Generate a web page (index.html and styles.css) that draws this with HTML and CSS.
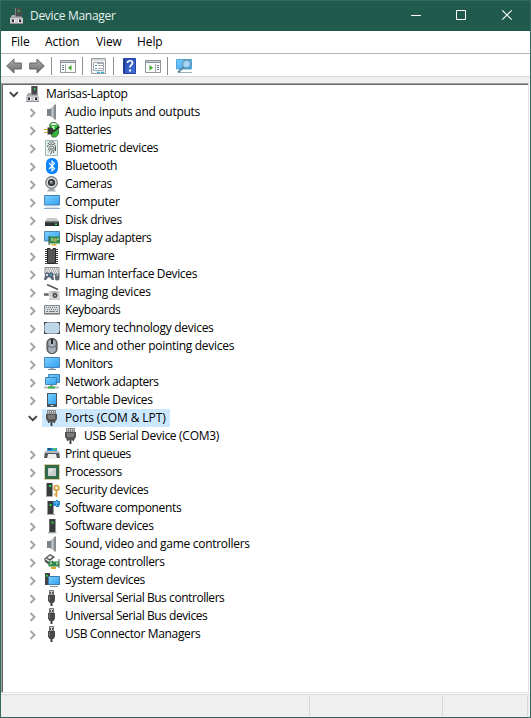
FILE: index.html
```html
<!DOCTYPE html>
<html lang="en">
<head>
<meta charset="utf-8">
<title>Device Manager</title>
<link rel="stylesheet" href="styles.css">
</head>
<body>
<svg class="defs" aria-hidden="true">
<defs>
<linearGradient id="g-screen" x1="0" y1="0" x2="1" y2="1"><stop offset="0" stop-color="#7cd0ff"/><stop offset="1" stop-color="#2fa0f0"/></linearGradient>
<linearGradient id="g-metal" x1="0" y1="0" x2="1" y2="0"><stop offset="0" stop-color="#6f7478"/><stop offset=".5" stop-color="#c5c9cc"/><stop offset="1" stop-color="#7b8084"/></linearGradient>
<linearGradient id="g-arrow" x1="0" y1="0" x2="0" y2="1"><stop offset="0" stop-color="#b4b4b4"/><stop offset=".5" stop-color="#8b8b8b"/><stop offset="1" stop-color="#707070"/></linearGradient>
<linearGradient id="g-help" x1="0" y1="0" x2="1" y2="1"><stop offset="0" stop-color="#2448ac"/><stop offset="1" stop-color="#4672df"/></linearGradient>
</defs>
<symbol id="right" viewBox="0 0 9 10"><path d="M2.500 1l4 4-4 4" fill="none" stroke="#a6a6a6" stroke-width="2"/></symbol>
<symbol id="down" viewBox="0 0 10 7"><path d="M.8 1.200l4 4 4-4" fill="none" stroke="#404040" stroke-width="1.900"/></symbol>
<symbol id="device" viewBox="0 0 16 16"><path d="M6 0h6.500v9H6z" fill="#494c4e"/><path d="M6 0h1v9H6z" fill="#808284"/><path d="M9 2h1.300v2H9z" fill="#2ce04a"/><path d="M3 7h3v1.500h6.500V9L14 10.500H1z" fill="#aaaaae"/><path d="M1 10h13v5.500H1z" fill="#c9c9cd"/><path d="M1 15h13v1H1z" fill="#929298"/><path d="M3 11.500h2v2.500H3zM10 11.500h2v2.500h-2z" fill="#2a2a2a"/><path d="M5 11.500h1v2.500H5zM9 11.500h1v2.500H9z" fill="#fff"/></symbol>
<symbol id="audio" viewBox="0 0 16 16"><path d="M3 5h3v7H3z" fill="#7d858c"/><path d="M6 5l5-4.500v15L6 12z" fill="url(#g-metal)"/><path d="M10.500.5h1.500v15h-1.500z" fill="#858b90"/></symbol>
<symbol id="battery" viewBox="0 0 16 16"><path d="M5.500 3l2-2.500h4L14.500 3v9L12 15H8z" fill="#35b53c" stroke="#356d38" stroke-width=".8"/><path d="M6.500 3L8 1h3.500L13.500 3z" fill="#d6e8d2"/><path d="M8 4h2.500v3.500H8z" fill="#b9f5b3"/><path d="M3.500 5.500H7c3.500 0 3.500 7 0 7H3.500z" fill="#373737"/><path d="M0 7.500h4M0 10.500h4" stroke="#c4a543" stroke-width="1.200"/><path d="M9 9c4 0 3-3 6.500-4" stroke="#222" stroke-width="1.500" fill="none"/></symbol>
<symbol id="finger" viewBox="0 0 16 16"><path d="M1.500.500h12v15h-12z" fill="#e6f1ee" stroke="#9ebab3"/><g fill="none" stroke="#474b4a" stroke-width=".9"><path d="M4 4c1-3 6-3 7 0M3.500 7c0-4 8-4 8 0v4M4 10c2-1 0-4 3.500-4S10 9 9.500 13M4.500 12c2-1 1.500-4 3-4s.5 4-1 6"/></g></symbol>
<symbol id="bluetooth" viewBox="0 0 16 16"><rect x="2" y="0" width="12" height="16" rx="5.500" fill="#0a84ff"/><path d="M5 5l5.500 5.500L8 13V3l2.500 2.500L5 11" fill="none" stroke="#fff" stroke-width="1.100"/></symbol>
<symbol id="camera" viewBox="0 0 16 16"><path d="M3 15.500l2-3h5l2 3z" fill="#ababab"/><circle cx="7.500" cy="6.500" r="5.800" fill="#d5d7d8" stroke="#777b7e" stroke-width="1.200"/><circle cx="7.500" cy="6.500" r="3.600" fill="#303336"/><circle cx="7.500" cy="6.500" r="1.800" fill="#777e84"/><circle cx="6.800" cy="5.500" r=".8" fill="#e1e6e9"/></symbol>
<symbol id="computer" viewBox="0 0 16 16"><path d="M.5 1.500h15v9.500H.5z" fill="url(#g-screen)" stroke="#477fae"/><path d="M2 12.500h12l1.500 2H.5z" fill="#dce4eb"/><path d="M0 14.500h16" stroke="#8eacc8"/></symbol>
<symbol id="disk" viewBox="0 0 16 16"><path d="M3 6h9.500L15 10H1z" fill="#c8cacb"/><path d="M1 9.500h14V14H1z" fill="#2e3030"/><path d="M1 10h14" stroke="#777"/><path d="M11 11.500h2V13h-2z" fill="#38dd51"/></symbol>
<symbol id="display" viewBox="0 0 16 16"><path d="M.5 1.500h15V11H.5z" fill="url(#g-screen)" stroke="#4e88b5"/><path d="M5 6.500h11v7H5z" fill="#36894a"/><path d="M5 6v9" stroke="#365645"/><path d="M7 8h2v3H7zM13 8h2v2h-2z" fill="#80c183"/><circle cx="11" cy="10" r="2" fill="#9ca95f"/><path d="M7.500 14h5v1.500h-5z" fill="#e9ac2d"/></symbol>
<symbol id="firmware" viewBox="0 0 16 16"><path d="M2 1v15M13 1v15" stroke="#424242" stroke-width="2" stroke-dasharray="1 1"/><path d="M3.500.500h2.500c0 2 3 2 3 0h2.500v15h-8z" fill="#565656" stroke="#242424"/></symbol>
<symbol id="hid" viewBox="0 0 16 16"><path d="M1 1.500h14v7H1z" fill="#e5e5e5" stroke="#8d8d8d"/><path d="M2 3h12M3 5h11M2 7h12" stroke="#858585" stroke-dasharray="1 1"/><path d="M1.500 7Q3 5.500 5 7.500Q7 5.500 9 7L10 14H8L6 11.500H4L2 14H0z" fill="#586878"/><circle cx="3" cy="9" r="1" fill="#fff"/><circle cx="7" cy="9" r="1" fill="#3ba8ed"/><rect x="11" y="7" width="4.500" height="7.500" rx="2" fill="#626a70"/><path d="M13.200 7v3" stroke="#ddd"/></symbol>
<symbol id="imaging" viewBox="0 0 16 16"><path d="M3 .5l11 5" stroke="#505050" stroke-width="1.400"/><path d="M5 7h10.500v7H7l-2-2z" fill="#d0d0cc"/><path d="M8 7.500h5v2H8zM0 9h5v3H0z" fill="#aaa"/><path d="M0 9.500h4v2H0z" fill="#666"/><circle cx="11" cy="11.500" r="2.400" fill="#454545"/><circle cx="11" cy="11.500" r="1" fill="#b1bec6"/><path d="M5 15h11" stroke="#a3a3a3"/></symbol>
<symbol id="keyboard" viewBox="0 0 16 16"><path d="M.5 3.500h15v8H.5z" fill="#d9dcde" stroke="#7e8489"/><path d="M2 5.500h12M3 7.500h11" stroke="#717981" stroke-dasharray="1 1"/><path d="M2 9.500h12" stroke="#717981" stroke-dasharray="2 1 6 1"/><path d="M0 12h16" stroke="#686c6e"/></symbol>
<symbol id="memory" viewBox="0 0 16 16"><rect x=".5" y="2.500" width="15" height="11" rx="1" fill="#bdd7e8" stroke="#8c9aa3"/><path d="M.5 4.500v-2h2M13.500 2.500h2v2M.5 11.500v2h2M13.500 13.500h2v-2" fill="none" stroke="#2c3033"/></symbol>
<symbol id="mouse" viewBox="0 0 16 16"><rect x="3" y=".5" width="10" height="15" rx="4.500" fill="#8f969e" stroke="#303338"/><path d="M5 3v8c0 4 2 4 3 4s3 0 3-4V3" fill="#aab0b7"/><path d="M8 1v5" stroke="#26282b" stroke-width="2"/><path d="M4 8q4 3 8 0" stroke="#626870" fill="none"/></symbol>
<symbol id="monitor" viewBox="0 0 16 16"><path d="M.5 1.500h15v10H.5z" fill="url(#g-screen)" stroke="#4686bb"/><path d="M6 12h4v1.500H6z" fill="#a2b8c8"/><path d="M4 13.500h8" stroke="#79899a"/></symbol>
<symbol id="network" viewBox="0 0 16 16"><path d="M4.500.500h11v8h-11z" fill="url(#g-screen)" stroke="#4182b7"/><path d="M1.500 3.500h11v7h-11z" fill="url(#g-screen)" stroke="#4182b7"/><path d="M6 11h3v2H6z" fill="#9ba5a6"/><path d="M0 13.500h15" stroke="#b3bdb7" stroke-width="2"/><path d="M4 12.500h7v2H4z" fill="#32b145"/></symbol>
<symbol id="portable" viewBox="0 0 16 16"><rect x="3" y="1" width="10" height="14" rx=".5" fill="#47545e"/><path d="M4 2h8v10H4z" fill="url(#g-screen)"/><path d="M6.500 13.500h3" stroke="#d8e0e4"/></symbol>
<symbol id="port" viewBox="0 0 16 16"><path d="M3 0h9v4H3z" fill="#888"/><path d="M4 1.500h8M4 3h8" stroke="#d9d9d9" stroke-dasharray="1 1"/><path d="M2 4h11v5l-2 3H4L2 9z" fill="#555"/><path d="M4 6h7M4 8h7" stroke="#a1a1a1"/><path d="M4 11h1.500v2H4zM9.500 11H11v2H9.500zM6.500 12h2v4h-2z" fill="#464646"/></symbol>
<symbol id="printer" viewBox="0 0 16 16"><path d="M3 2h10v4H3z" fill="#2596d7"/><path d="M4 2h3v2H4z" fill="#20508a"/><path d="M9 2h3v2H9z" fill="#50c869"/><path d="M1 5h14l1 7H0z" fill="#54585c"/><path d="M1 5h14v2H1z" fill="#b7babd"/><path d="M4 8h8l1 5H3z" fill="#edf0f2"/></symbol>
<symbol id="processor" viewBox="0 0 16 16"><path d="M.5.500h15v15H.5z" fill="none" stroke="#b79a42" stroke-dasharray="1 1"/><path d="M1 1h14v14H1z" fill="#326c4e"/><path d="M4 4h8v8H4z" fill="#c9d0cc"/><path d="M5 5h5L5 10z" fill="#e4e8e5"/></symbol>
<symbol id="tower" viewBox="0 0 16 16"><path d="M5 1h6.500v13.500H5z" fill="#393c3d"/><path d="M5 1h1v13H5z" fill="#6c7071"/><path d="M7.500 3.500h2v2h-2z" fill="#24dc3b"/><path d="M4 14.300h8.500v1H4z" fill="#9c9e9f"/></symbol>
<symbol id="security" viewBox="0 0 16 16"><path d="M2.500 1h6v14h-6z" fill="#393c3d"/><path d="M5 3h2v2H5z" fill="#24dc3b"/><path d="M2 14.500h7" stroke="#aaa"/><circle cx="12.500" cy="6" r="2.300" fill="none" stroke="#d8a040" stroke-width="1.800"/><path d="M12.500 8v7M12 12.500h-2" stroke="#d8a040" stroke-width="1.700"/></symbol>
<symbol id="component" viewBox="0 0 16 16"><path d="M3.500 1h6v14h-6z" fill="#393c3d"/><path d="M5.500 4h2v2h-2z" fill="#24dc3b"/><path d="M3 14.500h8" stroke="#aaa"/><path d="M9 1h3V0h2v1h2v4.500h-1v1.500h-3V6H9z" fill="#268bce"/><path d="M10 3h5M12.500 1v5" stroke="#62b7ea"/></symbol>
<symbol id="storage" viewBox="0 0 16 16"><path d="M1 4l5-4 5 3-5 4z" fill="#555"/><path d="M3 4l3-2.500L8.500 3 6 5z" fill="#eee"/><path d="M1 7l4 3M1 4v2l5 3 3-2" fill="none" stroke="#4e4e4e" stroke-width="1.200"/><path d="M4.500 7.500H15v5H4.500z" fill="#2f884b"/><path d="M15 5v9" stroke="#456b50"/><path d="M6 8.500h2v2H6zM12 8.500h2v2h-2z" fill="#a8d2ab"/><path d="M7 13h5v2H7z" fill="#e5a72b"/></symbol>
<symbol id="system" viewBox="0 0 16 16"><path d="M1 1h5v12H1z" fill="#424648"/><path d="M2 3h2v1.500H2z" fill="#2bde49"/><path d="M4.500 4.500h11v8h-11z" fill="url(#g-screen)" stroke="#3b7cac"/><path d="M6 14.500h8" stroke="#8597a4"/></symbol>
<symbol id="usb" viewBox="0 0 16 16"><path d="M5.500.500h4V5h-4z" fill="#d0d0d0" stroke="#6f6f6f"/><path d="M6 2h1v2H6zM8 2h1v2H8z" fill="#555"/><path d="M4 5h7v5.500L9.500 13h-4L4 10.500z" fill="#484848"/><path d="M5 6h1v4H5z" fill="#777"/><path d="M6.500 13h2v3h-2z" fill="#3b3b3b"/></symbol>
<symbol id="arrow" viewBox="0 0 16 16"><path d="M.7 8L8 1v4h7.300v6H8v4z" fill="url(#g-arrow)" stroke="#656565"/></symbol>
<symbol id="panel" viewBox="0 0 16 16"><path d="M.5 2.500h15v12H.5z" fill="#fafafa" stroke="#92979d"/><path d="M0 2h16v3H0z" fill="#8a929b"/><path d="M1 3.500h11" stroke="#c7cdd2"/><path d="M12 3.500h3" stroke="#eee" stroke-dasharray="1 1"/><path d="M5.500 6v8" stroke="#a6abb0"/><path d="M2 7.500h2M2 9.500h2M2 11.500h2" stroke="#607b91"/><path d="M11.500 7v5.500L8 9.750z" fill="#3aac26"/></symbol>
<symbol id="panel2" viewBox="0 0 16 16"><path d="M.5 2.500h15v12H.5z" fill="#fafafa" stroke="#92979d"/><path d="M0 2h16v3H0z" fill="#8a929b"/><path d="M1 3.500h11" stroke="#c7cdd2"/><path d="M12 3.500h3" stroke="#eee" stroke-dasharray="1 1"/><path d="M10.500 6v8" stroke="#a6abb0"/><path d="M12 7.500h2M12 9.500h2M12 11.500h2" stroke="#607b91"/><path d="M4.500 7v5.500L8 9.750z" fill="#3aac26"/></symbol>
<symbol id="properties" viewBox="0 0 16 16"><path d="M.5.500h14v15H.5z" fill="#f6f6f6" stroke="#969a9f"/><path d="M1 2h13" stroke="#bdc2c6"/><path d="M2.500 4.500h10v8h-10z" fill="#fff" stroke="#a2a7ac"/><path d="M6 4h6v2H6z" fill="#a5acb3"/><path d="M4 7.500h2M4 10.500h2" stroke="#3b9ac4"/><path d="M7 7.500h5M7 10.500h5" stroke="#a5a9ad"/><path d="M6 14.300h3M10 14.300h3" stroke="#33b2e0" stroke-width="1.300"/></symbol>
<symbol id="help" viewBox="0 0 14 16"><path d="M.5.500h12v15H.5z" fill="url(#g-help)" stroke="#26479b"/><path d="M1 1h1v14H1z" fill="#183783"/><path d="M4.500 5c0-3 5-3 5 0 0 2-2.500 2-2.500 4.500" fill="none" stroke="#fff" stroke-width="1.700"/><path d="M6 11.500h2v2H6z" fill="#fff"/></symbol>
<symbol id="scan" viewBox="0 0 16 16"><path d="M.5 1.500h15v9.500H.5z" fill="url(#g-screen)" stroke="#55a2cf"/><path d="M2 14.500h14" stroke="#9fb0ba"/><circle cx="10.500" cy="6" r="3.900" fill="#a4d8f8" stroke="#6794b0" stroke-width="1.200"/><path d="M7.500 9L2 14.500" stroke="#5f879d" stroke-width="1.800"/></symbol>
</svg>

<div class="window">
  <header class="titlebar">
    <svg class="icon"><use href="#device"/></svg>
    <h1 class="title">Device Manager</h1>
    <div class="controls">
      <svg viewBox="0 0 46 30"><path d="M10 14.500h10" stroke="#fff"/></svg>
      <svg viewBox="0 0 46 30"><path d="M9.500 9.500h9v9h-9z" fill="none" stroke="#fff"/></svg>
      <svg viewBox="0 0 46 30"><path d="M9.300 9.300l9.400 9.400M18.700 9.300l-9.400 9.400" stroke="#fff" stroke-width="1.100"/></svg>
    </div>
  </header>
  <nav class="menu"><span class="m-file">File</span><span class="m-action">Action</span><span class="m-view">View</span><span>Help</span></nav>
  <div class="toolbar">
    <svg class="icon"><use href="#arrow"/></svg>
    <svg class="icon forward"><use href="#arrow"/></svg>
    <i class="sep"></i>
    <svg class="icon"><use href="#panel"/></svg>
    <i class="sep"></i>
    <svg class="icon"><use href="#properties"/></svg>
    <i class="sep"></i>
    <svg class="icon help"><use href="#help"/></svg>
    <svg class="icon"><use href="#panel2"/></svg>
    <i class="sep"></i>
    <svg class="icon"><use href="#scan"/></svg>
  </div>
  <main class="tree">
    <div class="row root"><svg class="open"><use href="#down"/></svg><svg class="icon"><use href="#device"/></svg><span>Marisas-Laptop</span></div>
    <div class="row snug"><svg class="closed"><use href="#right"/></svg><svg class="icon"><use href="#audio"/></svg><span>Audio inputs and outputs</span></div>
    <div class="row tight"><svg class="closed"><use href="#right"/></svg><svg class="icon"><use href="#battery"/></svg><span>Batteries</span></div>
    <div class="row snug"><svg class="closed"><use href="#right"/></svg><svg class="icon"><use href="#finger"/></svg><span>Biometric devices</span></div>
    <div class="row"><svg class="closed"><use href="#right"/></svg><svg class="icon"><use href="#bluetooth"/></svg><span>Bluetooth</span></div>
    <div class="row"><svg class="closed"><use href="#right"/></svg><svg class="icon"><use href="#camera"/></svg><span>Cameras</span></div>
    <div class="row loose"><svg class="closed"><use href="#right"/></svg><svg class="icon"><use href="#computer"/></svg><span>Computer</span></div>
    <div class="row"><svg class="closed"><use href="#right"/></svg><svg class="icon"><use href="#disk"/></svg><span>Disk drives</span></div>
    <div class="row tight"><svg class="closed"><use href="#right"/></svg><svg class="icon"><use href="#display"/></svg><span>Display adapters</span></div>
    <div class="row tight"><svg class="closed"><use href="#right"/></svg><svg class="icon"><use href="#firmware"/></svg><span>Firmware</span></div>
    <div class="row"><svg class="closed"><use href="#right"/></svg><svg class="icon"><use href="#hid"/></svg><span>Human Interface Devices</span></div>
    <div class="row loose"><svg class="closed"><use href="#right"/></svg><svg class="icon"><use href="#imaging"/></svg><span>Imaging devices</span></div>
    <div class="row tight"><svg class="closed"><use href="#right"/></svg><svg class="icon"><use href="#keyboard"/></svg><span>Keyboards</span></div>
    <div class="row snug"><svg class="closed"><use href="#right"/></svg><svg class="icon"><use href="#memory"/></svg><span>Memory technology devices</span></div>
    <div class="row snug"><svg class="closed"><use href="#right"/></svg><svg class="icon"><use href="#mouse"/></svg><span>Mice and other pointing devices</span></div>
    <div class="row"><svg class="closed"><use href="#right"/></svg><svg class="icon"><use href="#monitor"/></svg><span>Monitors</span></div>
    <div class="row tight"><svg class="closed"><use href="#right"/></svg><svg class="icon"><use href="#network"/></svg><span>Network adapters</span></div>
    <div class="row"><svg class="closed"><use href="#right"/></svg><svg class="icon"><use href="#portable"/></svg><span>Portable Devices</span></div>
    <div class="row wide"><svg class="open"><use href="#down"/></svg><div class="selected"><svg class="icon"><use href="#port"/></svg><span>Ports (COM &amp; LPT)</span></div></div>
    <div class="row child snug"><svg class="icon"><use href="#port"/></svg><span>USB Serial Device (COM3)</span></div>
    <div class="row tight"><svg class="closed"><use href="#right"/></svg><svg class="icon"><use href="#printer"/></svg><span>Print queues</span></div>
    <div class="row tight"><svg class="closed"><use href="#right"/></svg><svg class="icon"><use href="#processor"/></svg><span>Processors</span></div>
    <div class="row"><svg class="closed"><use href="#right"/></svg><svg class="icon"><use href="#security"/></svg><span>Security devices</span></div>
    <div class="row"><svg class="closed"><use href="#right"/></svg><svg class="icon"><use href="#component"/></svg><span>Software components</span></div>
    <div class="row"><svg class="closed"><use href="#right"/></svg><svg class="icon"><use href="#tower"/></svg><span>Software devices</span></div>
    <div class="row snug"><svg class="closed"><use href="#right"/></svg><svg class="icon"><use href="#audio"/></svg><span>Sound, video and game controllers</span></div>
    <div class="row"><svg class="closed"><use href="#right"/></svg><svg class="icon"><use href="#storage"/></svg><span>Storage controllers</span></div>
    <div class="row"><svg class="closed"><use href="#right"/></svg><svg class="icon"><use href="#system"/></svg><span>System devices</span></div>
    <div class="row tight"><svg class="closed"><use href="#right"/></svg><svg class="icon"><use href="#usb"/></svg><span>Universal Serial Bus controllers</span></div>
    <div class="row tight"><svg class="closed"><use href="#right"/></svg><svg class="icon"><use href="#usb"/></svg><span>Universal Serial Bus devices</span></div>
    <div class="row"><svg class="closed"><use href="#right"/></svg><svg class="icon"><use href="#usb"/></svg><span>USB Connector Managers</span></div>
  </main>
  <footer class="status"><i></i><i></i><i></i></footer>
</div>
</body>
</html>
```
FILE: styles.css
```css
* { box-sizing: border-box; }
body { margin: 0; font: 12px/18px "Open Sans", "Noto Sans", sans-serif; color: #000; }
.defs { position: absolute; width: 0; height: 0; }
.window { width: 531px; height: 718px; display: flex; flex-direction: column; background: linear-gradient(#efefef 0 0) 0 76px / 100% 6px no-repeat, #fff; border: 1px solid #33695d; overflow: hidden; }
.icon { width: 16px; height: 16px; flex: none; display: block; }
.titlebar { height: 30px; flex: none; display: flex; align-items: center; padding-left: 8px; background: #1f5a4c; color: #e6efec; }
.title { margin: 0 0 0 5px; font-size: 12px; font-weight: 400; letter-spacing: -0.3px; }
.controls { display: flex; margin: 0 -9px 0 auto; }
.controls svg { width: 46px; height: 30px; flex: none; }
.menu { height: 23px; flex: none; display: flex; padding: 2px 0 0 10px; border-bottom: 1px solid #b1b3bb; letter-spacing: -0.1px; }
.menu span { flex: none; }
.m-file { width: 34px; }
.m-action { width: 51px; }
.m-view { width: 41px; }
.toolbar { height: 23px; flex: none; display: flex; align-items: center; padding: 2px 0 0 5px; border-bottom: 1px solid #d9d9d9; }
.forward { transform: scaleX(-1); margin-left: 7px; }
.sep { width: 1px; height: 18px; margin: 0 8px 0 6px; background: #8e8e8e; }
.help { width: 14px; margin: 0 8px 0 1px; }
.tree { flex: 1; margin: 6px 1px 1px 0; border: 1px solid #a0a0a0; border-right-color: #e1e1e1; border-bottom-color: #e1e1e1; box-shadow: inset 1px 1px #696969; padding: 1px 0 0 1px; }
.row { height: 18px; display: flex; align-items: center; padding-left: 25px; letter-spacing: -0.35px; white-space: nowrap; }
.row span { margin-left: 5px; }
.wide { letter-spacing: -0.1px; }
.loose { letter-spacing: -0.22px; }
.snug { letter-spacing: -0.29px; }
.tight { letter-spacing: -0.44px; }
.root { padding-left: 6px; }
.child { padding-left: 60px; }
.closed { width: 9px; height: 10px; margin: 2px 7px 0 0; flex: none; }
.open { width: 10px; height: 7px; margin: 1px 6px 0 0; flex: none; }
.selected { height: 18px; display: flex; align-items: center; padding: 0 4px 0 2px; margin-left: -2px; background: #cce8ff; }
.status { height: 23px; flex: none; display: grid; grid-template-columns: 309px 133px 85px; padding: 1px 0; background: #f0f0f0; border-top: 1px solid #d7d7d7; }
.status i { border-right: 1px solid #d7d7d7; }
```
